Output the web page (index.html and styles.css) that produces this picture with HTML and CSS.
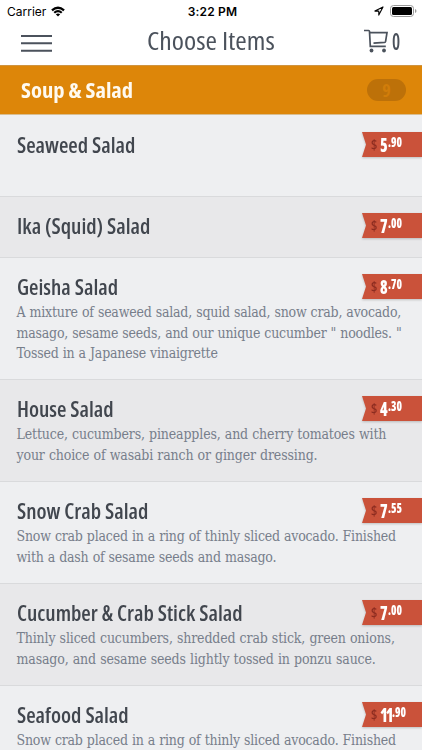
FILE: index.html
```html
<!DOCTYPE html>
<html lang="en">
<head>
<meta charset="utf-8">
<title>Choose Items</title>
<link rel="stylesheet" href="styles.css">
</head>
<body>
<div class="app">
  <div class="status">
    <div class="carrier">Carrier
      <svg width="14" height="11" viewBox="0 0 14 11"><path d="M.2 3.600Q7-2.600 13.800 3.600L12.300 5.200Q7 .7 1.700 5.200ZM2.500 6Q7 2.200 11.500 6L10 7.500Q7 5 4 7.500ZM4.800 8.300Q7 6.600 9.200 8.300L7 10.600Z"/></svg>
    </div>
    <div class="time">3:22 PM</div>
    <div class="power">
      <svg width="10" height="10" viewBox="0 0 10 10"><path d="M9 .9.9 5.100H4.800V9.100Z" fill="none" stroke="#000" stroke-width="1.100" stroke-linejoin="round"/></svg>
      <svg width="27" height="12" viewBox="0 0 27 12"><rect x=".5" y=".5" width="23" height="11" rx="3" fill="#fff" stroke="#999"/><rect x="2" y="2" width="20" height="8" rx="1.500"/><path d="M25 4q1.500.5 1.500 2T25 8Z" fill="#999"/></svg>
    </div>
  </div>
  <header class="bar">
    <svg class="menu" width="31" height="17" viewBox="0 0 31 17"><path d="M0 1H31M0 8.300H31M0 15.700H31" stroke="#4b525c" stroke-width="1.900"/></svg>
    <h1>Choose Items</h1>
    <div class="cart">
      <svg width="24" height="24" viewBox="0 0 24 24" fill="none" stroke="#4b525c" stroke-width="1.700"><path d="M0 1.500H4.600Q5.400 1.500 5.500 2.400L6.300 17.300H21.800M5.700 3.700H23L21.600 12.400Q21.400 13.300 20.500 13.400L9.500 14.200"/><circle cx="7.500" cy="21.500" r="1.900" fill="#4b525c" stroke="none"/><circle cx="20" cy="21.500" r="1.900" fill="#4b525c" stroke="none"/></svg>
      <span>0</span>
    </div>
  </header>
  <div class="category"><h2>Soup &amp; Salad</h2><span class="count">9</span></div>
  <main class="items">
    <article class="item spacious"><h3>Seaweed Salad</h3><div class="price"><i>$</i><b>5</b><sup>.90</sup></div></article>
    <article class="item alt short"><h3>Ika (Squid) Salad</h3><div class="price"><i>$</i><b>7</b><sup>.00</sup></div></article>
    <article class="item tall"><h3>Geisha Salad</h3><p>A mixture of seaweed salad, squid salad, snow crab, avocado,<br>masago, sesame seeds, and our unique cucumber " noodles. "<br>Tossed in a Japanese vinaigrette</p><div class="price"><i>$</i><b>8</b><sup>.70</sup></div></article>
    <article class="item alt"><h3>House Salad</h3><p>Lettuce, cucumbers, pineapples, and cherry tomatoes with<br>your choice of wasabi ranch or ginger dressing.</p><div class="price"><i>$</i><b>4</b><sup>.30</sup></div></article>
    <article class="item"><h3>Snow Crab Salad</h3><p>Snow crab placed in a ring of thinly sliced avocado. Finished<br>with a dash of sesame seeds and masago.</p><div class="price"><i>$</i><b>7</b><sup>.55</sup></div></article>
    <article class="item alt"><h3>Cucumber &amp; Crab Stick Salad</h3><p>Thinly sliced cucumbers, shredded crab stick, green onions,<br>masago, and sesame seeds lightly tossed in ponzu sauce.</p><div class="price"><i>$</i><b>7</b><sup>.00</sup></div></article>
    <article class="item"><h3>Seafood Salad</h3><p>Snow crab placed in a ring of thinly sliced avocado. Finished</p><div class="price double"><i>$</i><b>11</b><sup>.90</sup></div></article>
  </main>
</div>
</body>
</html>
```
FILE: styles.css
```css
* { box-sizing: border-box; margin: 0; padding: 0; }
body { background: #fff; font-family: "Open Sans", sans-serif; overflow: hidden; }
.app { height: 750px; display: flex; flex-direction: column; overflow: hidden; }
.status { height: 20px; flex: none; display: grid; grid-template-columns: 1fr auto 1fr; align-items: center; padding: 2px 5px 0 7px; font-family: Inter, sans-serif; font-size: 12px; color: #000; }
.carrier { display: flex; align-items: center; gap: 5px; }
.time { font-weight: 600; letter-spacing: .2px; padding-left: 1px; }
.power { display: flex; align-items: center; justify-content: flex-end; gap: 6px; }
.bar { height: 45px; flex: none; display: grid; grid-template-columns: 1fr auto 1fr; padding: 0 21px; color: #4b525c; }
.menu { margin-top: 15px; }
h1 { font-size: 26px; font-weight: 400; font-stretch: 75%; line-height: 40px; transform: scaleX(1.065); }
.cart { display: flex; justify-content: flex-end; gap: 4px; padding-top: 9px; }
.cart span { font-size: 24px; font-stretch: 75%; font-weight: 600; line-height: 24px; width: 9px; transform: scaleX(.76); transform-origin: left; }
.category { height: 50px; flex: none; display: flex; align-items: center; justify-content: space-between; padding: 0 16px 0 21px; background: #dd8609; border-top: 1px solid #cf9440; border-bottom: 1px solid #d8bd90; color: #fffaf0; }
h2 { font-size: 20.500px; font-weight: 700; font-stretch: 75%; line-height: 28px; transform: scaleX(1.1); transform-origin: left; }
.count { width: 39px; height: 22px; border-radius: 11px; background: #bd7109; color: #d17d0a; text-align: center; font-weight: 700; font-size: 18px; font-stretch: 75%; line-height: 22px; }
.items { flex: none; }
.item { position: relative; height: 102px; padding: 15px 0 0 16.500px; background: #eeeff1; border-top: 1px solid #d9dadc; overflow: hidden; }
.item.alt { background: #e8e8ea; }
.item.spacious { height: 81px; border-top-color: #eeeff1; }
.item.short { height: 61px; }
.item.tall { height: 122px; }
h3 { width: max-content; color: #41464e; font-size: 21px; font-weight: 600; font-stretch: 75%; line-height: 29px; white-space: nowrap; transform: scaleX(1.03); transform-origin: left; }
p { color: #777e8b; font-family: "DejaVu Serif", serif; font-stretch: condensed; font-size: 14px; letter-spacing: -.21px; word-spacing: .35px; line-height: 20.670px; white-space: nowrap; }
.alt p { letter-spacing: -.15px; }
.price { position: absolute; top: 16px; right: 0; width: 60px; height: 25px; display: flex; padding-left: 9px; color: #fff; font-stretch: 75%; filter: drop-shadow(0 1px 1px rgba(0, 0, 0, .2)); }
.price::before { content: ""; position: absolute; z-index: -1; inset: 0; background: #ca523a; clip-path: polygon(0 0, 100% 0, 100% 100%, 0 100%, 4px 50%); }
.price i { width: 9px; font-style: normal; font-size: 14px; font-weight: 600; line-height: 26px; color: #8c2c20; }
.price b { width: 7.500px; font-size: 20px; font-weight: 800; line-height: 25px; transform: scaleX(.77); transform-origin: left; }
.price.double b { width: 12px; letter-spacing: -2.500px; }
.price sup { font-size: 14px; font-weight: 800; line-height: 20px; transform: scaleX(.79); transform-origin: left; }
```
